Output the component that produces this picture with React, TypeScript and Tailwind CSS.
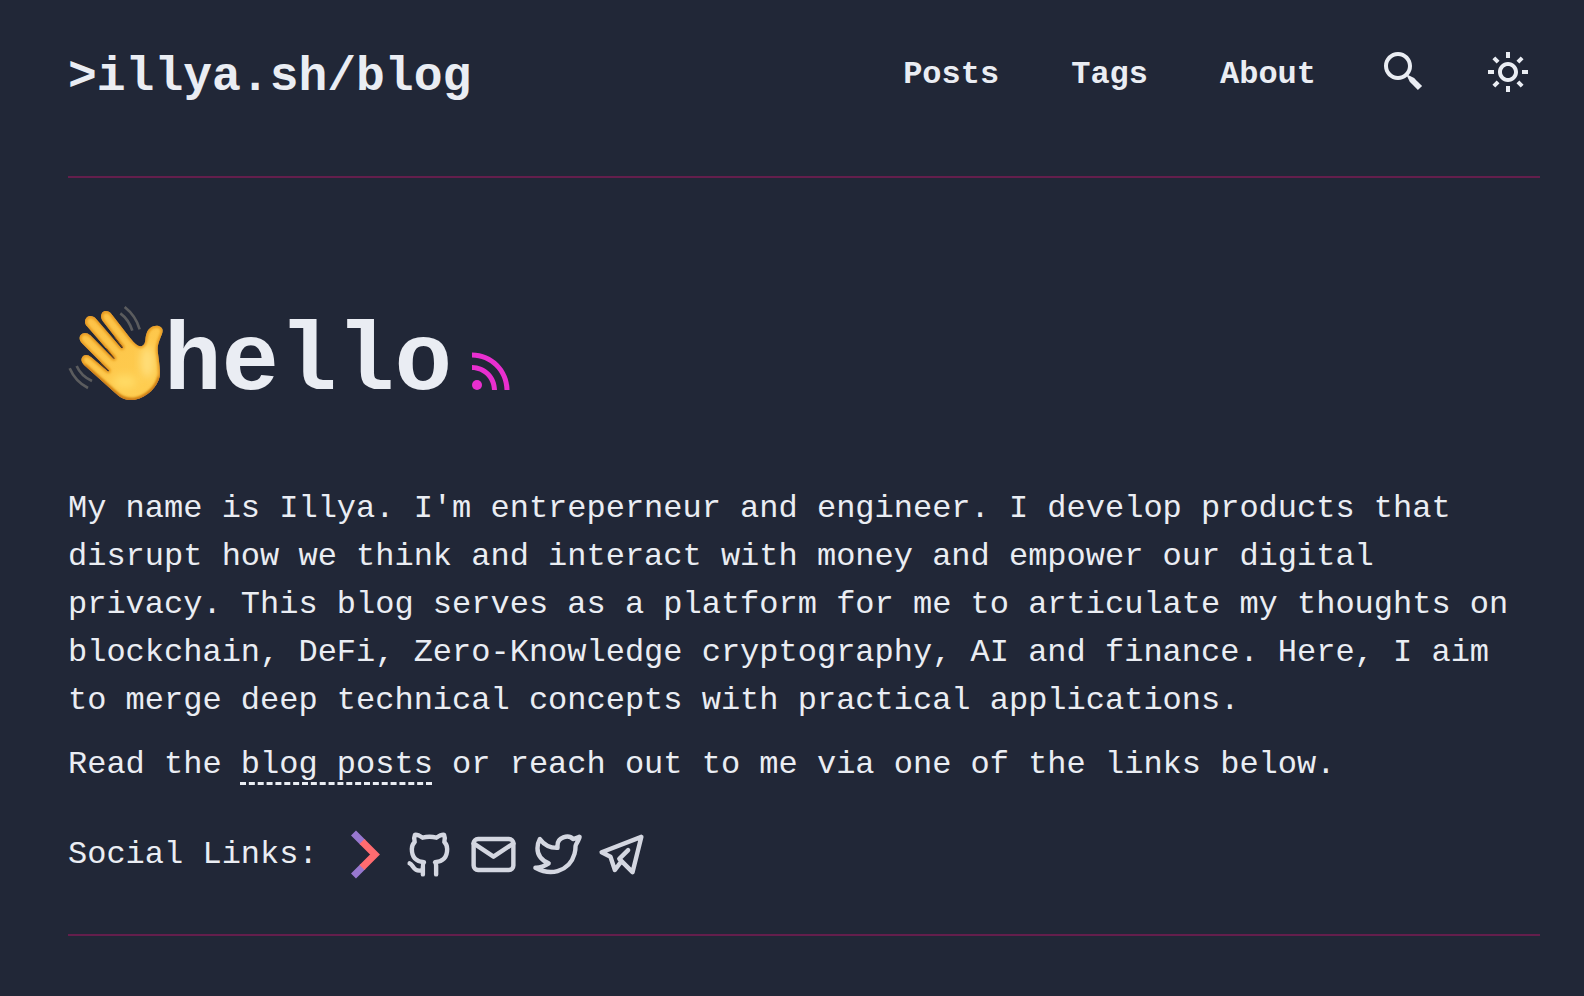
import type { ReactNode } from "react";

const HAND =
  "M308 122C308 110 292 104 280 109C264 115 258 128 256 150C255 165 245 174 232 166C225 161 215 150 208 141L155 73C147 62 133 60 126 69C121 77 123 85 128 93L188 170C190 174 186 176 183 173L108 86C100 77 86 75 79 84C72 93 75 102 81 109L163 203C166 206 162 208 159 205L91 136C82 127 69 126 62 135C56 143 59 152 66 160L146 240C149 243 146 246 142 243L94 202C85 193 72 192 67 201C61 210 66 218 73 226L165 308C185 328 205 332 225 329C262 322 292 290 299 260C302 235 295 205 293 180C292 155 308 135 308 122Z";

function WavingHand() {
  return (
    <svg viewBox="24 45 288 288" className="size-24 shrink-0" role="img" aria-label="Waving hand">
      <defs>
        <linearGradient id="skin" x1="0" y1="0" x2="0.6" y2="1">
          <stop offset="0" stopColor="#fdc146" />
          <stop offset="1" stopColor="#fecd50" />
        </linearGradient>
        <filter id="soft" x="-20%" y="-20%" width="140%" height="140%">
          <feGaussianBlur stdDeviation="5" />
        </filter>
        <filter id="glow" x="-50%" y="-50%" width="200%" height="200%">
          <feGaussianBlur stdDeviation="12" />
        </filter>
        <clipPath id="hand">
          <path d={HAND} />
        </clipPath>
      </defs>
      <g fill="none" stroke="#5b5c5e" strokeWidth="8">
        <path d="M194 51Q228 78 239 118" />
        <path d="M181 70Q206 88 217 122" />
        <path d="M29 235Q46 275 84 294" />
        <path d="M50 228Q63 258 96 273" />
      </g>
      <path d={HAND} fill="url(#skin)" />
      <g clipPath="url(#hand)">
        <ellipse cx="262" cy="215" rx="20" ry="48" fill="#ffdf7c" filter="url(#glow)" />
        <ellipse cx="195" cy="275" rx="36" ry="20" fill="#ffdb66" filter="url(#glow)" />
        <path d={HAND} fill="none" stroke="#dc8410" strokeWidth="8" filter="url(#soft)" />
        <path d="M73 226L165 308C185 328 205 332 225 329C262 322 292 290 299 260" fill="none" stroke="#b9650a" strokeWidth="7" filter="url(#soft)" />
      </g>
      <g fill="none" stroke="#8a4d0c" strokeWidth="3" strokeLinecap="round">
        <path d="M165 143L187 172" />
        <path d="M140 176L162 204" />
        <path d="M122 219L144 241" />
      </g>
    </svg>
  );
}

function SocialLink({ label, children }: { label: string; children: ReactNode }) {
  return (
    <a href="#" aria-label={label}>
      <svg
        viewBox="0 0 24 24"
        className="size-[53px] fill-none stroke-[#d4d7e1] stroke-2"
        strokeLinecap="round"
        strokeLinejoin="round"
      >
        {children}
      </svg>
    </a>
  );
}

function Header() {
  return (
    <header className="flex items-start justify-between border-b-2 border-[#641e4c] pt-12 pb-[70px]">
      <a href="#" className="text-5xl leading-[58px] font-bold whitespace-nowrap">
        &gt;illya.sh/blog
      </a>
      <nav className="flex items-start gap-[72px] pr-2 text-[32px] leading-[48px] font-semibold">
        <a href="#" className="pt-[3px]">Posts</a>
        <a href="#" className="pt-[3px]">Tags</a>
        <a href="#" className="pt-[3px]">About</a>
        <div className="-ml-2 flex gap-14">
          <a href="#" aria-label="Search">
            <svg viewBox="0 0 24 24" className="size-12 fill-current">
              <path d="M19.023 16.977a35.13 35.13 0 0 1-1.367-1.384c-.372-.378-.596-.653-.596-.653l-2.8-1.337A6.962 6.962 0 0 0 16 9c0-3.859-3.14-7-7-7S2 5.141 2 9s3.14 7 7 7c1.763 0 3.37-.66 4.603-1.739l1.337 2.8s.275.224.653.596c.387.363.896.854 1.384 1.367l1.358 1.392.604.646 2.121-2.121-.646-.604c-.379-.372-.885-.866-1.391-1.36zM9 14c-2.757 0-5-2.243-5-5s2.243-5 5-5 5 2.243 5 5-2.243 5-5 5z" />
            </svg>
          </a>
          <button type="button" aria-label="Toggle theme" className="size-12">
            <svg viewBox="0 0 24 24" className="size-12 fill-current">
              <path d="M6.993 12c0 2.761 2.246 5.007 5.007 5.007s5.007-2.246 5.007-5.007S14.761 6.993 12 6.993 6.993 9.239 6.993 12zM12 8.993c1.658 0 3.007 1.349 3.007 3.007S13.658 15.007 12 15.007 8.993 13.658 8.993 12 10.342 8.993 12 8.993zM10.998 19h2v3h-2zm0-17h2v3h-2zm-9 9h3v2h-3zm17 0h3v2h-3zM4.219 18.363l2.12-2.122 1.415 1.414-2.12 2.122zM16.24 6.344l2.122-2.122 1.414 1.414-2.122 2.122zM6.342 7.759 4.22 5.637l1.415-1.414 2.12 2.122zm13.434 10.605-1.414 1.414-2.122-2.122 1.414-1.414z" />
            </svg>
          </button>
        </div>
      </nav>
    </header>
  );
}

export default function App() {
  return (
    <div className="min-h-screen bg-[#212737] pr-11 pl-[68px] font-['Liberation_Mono',monospace] text-[#eaedf3]">
      <Header />
      <main className="border-b-2 border-[#641e4c] pt-[127px] pb-[53px] text-[32px] leading-[48px]">
        <div className="flex items-end">
          <WavingHand />
          <div className="flex items-end pb-px">
            <h1 className="text-8xl leading-[72px] font-bold">hello</h1>
            <a href="#" aria-label="RSS feed" className="ml-2.5">
              <svg viewBox="0 0 24 24" className="size-[60px] fill-[#e92fcf]">
                <path d="M19 20.001C19 11.729 12.271 5 4 5v2c7.168 0 13 5.832 13 13.001h2z" />
                <path d="M12 20.001h2C14 14.486 9.514 10 4 10v2c4.411 0 8 3.589 8 8.001z" />
                <circle cx="6" cy="18" r="2" />
              </svg>
            </a>
          </div>
        </div>
        <p className="mt-[84px]">
          My name is Illya. I'm entreperneur and engineer. I develop products that disrupt how we
          think and interact with money and empower our digital privacy. This blog serves as a
          platform for me to articulate my thoughts on blockchain, DeFi, Zero-Knowledge
          cryptography, AI and finance. Here, I aim to merge deep technical concepts with practical
          applications.
        </p>
        <p className="mt-4">
          Read the{" "}
          <a href="#" className="underline decoration-dashed decoration-3 underline-offset-9 [text-decoration-skip-ink:none]">
            blog posts
          </a>{" "}
          or reach out to me via one of the links below.
        </p>
        <div className="mt-[39px] flex items-center">
          <span>Social Links:</span>
          <div className="ml-[21px] flex items-center gap-[11px]">
            <a href="#" aria-label="Homepage">
              <svg viewBox="0 0 53 53" className="size-[53px]" fill="none" strokeWidth="7">
                <path d="M14.500 5L24 14.500M14.500 48L24 38.500" stroke="#9878cf" />
                <path d="M23 13.500L36 26.500L23 39.500" stroke="#ff6c70" />
              </svg>
            </a>
            <SocialLink label="GitHub">
              <path d="M9 19c-4.300 1.400 -4.300 -2.500 -6 -3m12 5v-3.500c0 -1 .1 -1.400 -.5 -2c2.800 -.3 5.500 -1.400 5.500 -6a4.600 4.600 0 0 0 -1.300 -3.200a4.200 4.200 0 0 0 -.1 -3.200s-1.100 -.3 -3.500 1.300a12.300 12.300 0 0 0 -6.200 0c-2.400 -1.600 -3.500 -1.300 -3.500 -1.300a4.200 4.200 0 0 0 -.1 3.200a4.600 4.600 0 0 0 -1.300 3.200c0 4.600 2.700 5.700 5.500 6c-.6 .6 -.6 1.200 -.5 2v3.500" />
            </SocialLink>
            <SocialLink label="Email">
              <rect x="3" y="5" width="18" height="14" rx="2" />
              <path d="M3 7l9 6l9 -6" />
            </SocialLink>
            <SocialLink label="Twitter">
              <path d="M22 4.010c-1 .49 -1.980 .689 -3 .99c-1.121 -1.265 -2.783 -1.335 -4.380 -.737s-2.643 2.060 -2.620 3.737v1c-3.245 .083 -6.135 -1.395 -8 -4c0 0 -4.182 7.433 4 11c-1.872 1.247 -3.739 2.088 -6 2c3.308 1.803 6.913 2.423 10.034 1.517c3.580 -1.040 6.522 -3.723 7.651 -7.742a13.840 13.840 0 0 0 .497 -3.753c0 -.249 1.510 -2.772 1.818 -4.013z" />
            </SocialLink>
            <SocialLink label="Telegram">
              <path d="M15 10l-4 4l6 6l4 -16l-18 7l4 2l2 6l3 -4" />
            </SocialLink>
          </div>
        </div>
      </main>
    </div>
  );
}
